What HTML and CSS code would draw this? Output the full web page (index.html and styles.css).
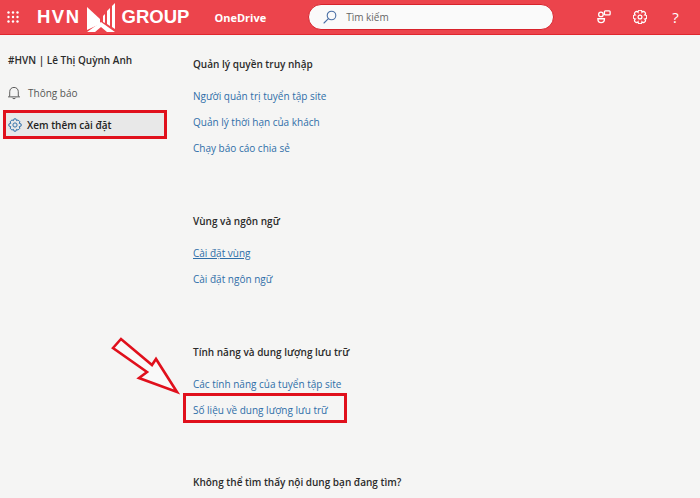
FILE: index.html
```html
<!DOCTYPE html>
<html lang="vi">
<head>
    <meta charset="UTF-8">
    <title>Cài đặt site</title>
    <link rel="stylesheet" href="styles.css">
</head>
<body>

    <header class="topbar">
        <svg class="waffle" width="12" height="12" viewBox="0 0 12 12" fill="#fff">
            <circle cx="1.5" cy="1.5" r="1.2"/><circle cx="6" cy="1.5" r="1.2"/><circle cx="10.5" cy="1.5" r="1.2"/>
            <circle cx="1.5" cy="6" r="1.2"/><circle cx="6" cy="6" r="1.2"/><circle cx="10.5" cy="6" r="1.2"/>
            <circle cx="1.5" cy="10.5" r="1.2"/><circle cx="6" cy="10.5" r="1.2"/><circle cx="10.5" cy="10.5" r="1.2"/>
        </svg>
        <div class="logo">
            <span class="logo-hvn">HVN</span>
            <svg width="29" height="30" viewBox="0 0 29 30" fill="#fff">
                <!-- left wing, chevron roof, then the three rising bars -->
                <path d="M0 5 L13 17 L13 22 L0 28 Z"/>
                <path d="M0 30 L14 20 L28 30 L20 30 L14 25 L8 30 Z"/>
                <path d="M16 14 L18 12 L18 21 L16 20 Z"/>
                <path d="M20 9 L23 6 L23 24 L20 22 Z"/>
                <path d="M25 4 L28 1 L28 27 L25 25 Z"/>
            </svg>
            <span>GROUP</span>
        </div>
        <span class="app-name">OneDrive</span>
        <div class="search">
            <svg width="14" height="14" viewBox="0 0 14 14" fill="none" stroke="#4a6fa5" stroke-width="1.1">
                <circle cx="8.5" cy="5.5" r="4.3"/>
                <path d="M5.4 8.6 L1 13" stroke-linecap="round"/>
            </svg>
            <span>Tìm kiếm</span>
        </div>
        <div class="top-icons">
            <svg width="14" height="14" viewBox="0 0 16 16" fill="none" stroke="#fff" stroke-width="1.5">
                <rect x="8.5" y="1" width="6.5" height="4.5" rx="1"/>
                <circle cx="4.5" cy="5" r="2.6"/>
                <path d="M1 10 H8.5 C8.5 13 7 14.5 4.7 14.5 C2.5 14.5 1 13 1 10 Z"/>
            </svg>
            <svg width="14" height="14" viewBox="0 0 16 16" fill="none" stroke="#fff" stroke-width="1.4">
                <circle cx="8" cy="8" r="2.2"/>
                <path d="M13.5 5.7 A2 2 0 0 1 13.5 10.3 A2 2 0 0 1 10.3 13.5 A2 2 0 0 1 5.7 13.5 A2 2 0 0 1 2.5 10.3 A2 2 0 0 1 2.5 5.7 A2 2 0 0 1 5.7 2.5 A2 2 0 0 1 10.3 2.5 A2 2 0 0 1 13.5 5.7 Z"/>
            </svg>
            <span class="help">?</span>
        </div>
    </header>

    <div class="page">
        <aside class="sidebar">
            <div class="site-name">#HVN | Lê Thị Quỳnh Anh</div>
            <div class="side-item">
                <svg width="12" height="14" viewBox="0 0 14 15" fill="none" stroke="#555" stroke-width="1.1">
                    <path d="M2 11 V6 C2 3 4 1 7 1 C10 1 12 3 12 6 V11 L13.5 12 H0.5 Z" stroke-linejoin="round"/>
                    <path d="M5 13 C5.3 14.5 8.7 14.5 9 13"/>
                </svg>
                <span>Thông báo</span>
            </div>
            <div class="side-item active">
                <svg width="14" height="14" viewBox="0 0 16 16" fill="none" stroke="#2f6ea8" stroke-width="1.1">
                    <circle cx="8" cy="8" r="2.4"/>
                    <path d="M6.8 1 H9.2 L9.7 3 L11.5 2.2 L13.6 4.3 L12.8 6.1 L15 6.8 V9.2 L12.8 9.9 L13.6 11.7 L11.5 13.8 L9.7 13 L9.2 15 H6.8 L6.3 13 L4.5 13.8 L2.4 11.7 L3.2 9.9 L1 9.2 V6.8 L3.2 6.1 L2.4 4.3 L4.5 2.2 L6.3 3 Z" stroke-linejoin="round"/>
                </svg>
                <span>Xem thêm cài đặt</span>
            </div>
        </aside>

        <main class="content">
            <section class="group">
                <h2>Quản lý quyền truy nhập</h2>
                <a href="#">Người quản trị tuyển tập site</a>
                <a href="#">Quản lý thời hạn của khách</a>
                <a href="#">Chạy báo cáo chia sẻ</a>
            </section>
            <section class="group">
                <h2>Vùng và ngôn ngữ</h2>
                <a href="#" class="underlined">Cài đặt vùng</a>
                <a href="#">Cài đặt ngôn ngữ</a>
            </section>
            <section class="group">
                <h2>Tính năng và dung lượng lưu trữ</h2>
                <a href="#">Các tính năng của tuyển tập site</a>
                <a href="#" class="boxed">Số liệu về dung lượng lưu trữ</a>
            </section>
            <section class="group last">
                <h2>Không thể tìm thấy nội dung bạn đang tìm?</h2>
            </section>
        </main>
    </div>

    <!-- annotation drawn over the page, coordinates are the page's own -->
    <svg class="arrow" width="700" height="498" viewBox="0 0 700 498" fill="#f9f9f9" stroke="#e0101c" stroke-width="2.6">
        <path d="M113 348 L121 339 L152 365 L156 359 L177 392 L139 378 L147 372 Z"/>
    </svg>

</body>
</html>
```

FILE: styles.css
```css
body {
    font-family: "Open Sans", "Noto Sans", Arial, sans-serif;
    margin: 0;
    padding: 0;
    height: 498px;
    overflow: hidden;
    background-color: #f5f5f4;
    color: #2b2b2b;
    font-size: 11px;
}

.topbar {
    display: flex;
    align-items: center;
    height: 34px;
    background-color: #ec444c;
    border-bottom: 1px solid #e0262e;
    color: #fff;
    padding-left: 7px;
}

.waffle {
    flex: none;
}

.logo {
    display: flex;
    align-items: center;
    gap: 6px;
    margin-left: 18px;
    font-family: "Liberation Sans", Arial, sans-serif;
    font-size: 18.5px;
    font-weight: bold;
}

.logo-hvn {
    letter-spacing: 1.5px;
}

.app-name {
    margin-left: 25px;
    font-size: 11px;
    font-weight: bold;
}

.search {
    display: flex;
    align-items: center;
    gap: 9px;
    box-sizing: border-box;
    width: 246px;
    height: 26px;
    margin-left: 42px;
    padding-left: 14px;
    background-color: #fafafa;
    border: 1px solid #d8232c;
    border-radius: 13px;
    color: #666;
    font-size: 10px;
}

.top-icons {
    display: flex;
    align-items: center;
    gap: 22px;
    margin-left: 43px;
}

.help {
    margin-left: 3px;
    font-size: 15px;
    line-height: 16px;
}

.page {
    display: flex;
    height: 463px;
}

.sidebar {
    width: 193px;
    flex: none;
    padding-top: 18px;
}

.site-name {
    margin-left: 8px;
    font-size: 10px;
    font-weight: 600;
    line-height: 14px;
}

.side-item {
    display: flex;
    align-items: center;
    gap: 8px;
    box-sizing: border-box;
    height: 24px;
    margin-top: 14px;
    padding-left: 8px;
    font-size: 10px;
    color: #555;
}

.side-item.active {
    gap: 5px;
    width: 164px;
    height: 29px;
    margin-top: 5px;
    margin-left: 3px;
    padding-left: 2px;
    background-color: #e8e8e8;
    border: 3px solid #e0101c;
    color: #222;
    font-weight: 600;
}

.content {
    flex: 1;
    padding-top: 22px;
}

.group {
    display: flex;
    flex-direction: column;
    align-items: flex-start;
    margin-bottom: 47px;
}

.group.last {
    margin-bottom: 0;
}

.group h2 {
    margin: 0 0 18px;
    font-size: 10px;
    font-weight: 600;
    line-height: 14px;
}

.group.last h2 {
    margin-bottom: 0;
}

.group a {
    font-size: 10px;
    line-height: 14px;
    color: #2f6ea8;
    text-decoration: none;
    margin: 0 0 12px;
}

.group a.underlined {
    text-decoration: underline;
}

.group a.boxed {
    box-sizing: border-box;
    width: 164px;
    height: 30px;
    margin: -10px 0 5px -10px;
    padding: 7px 0 3px 7px;
    border: 3px solid #e0101c;
}

.arrow {
    position: absolute;
    left: 0;
    top: 0;
    pointer-events: none;
}
```
